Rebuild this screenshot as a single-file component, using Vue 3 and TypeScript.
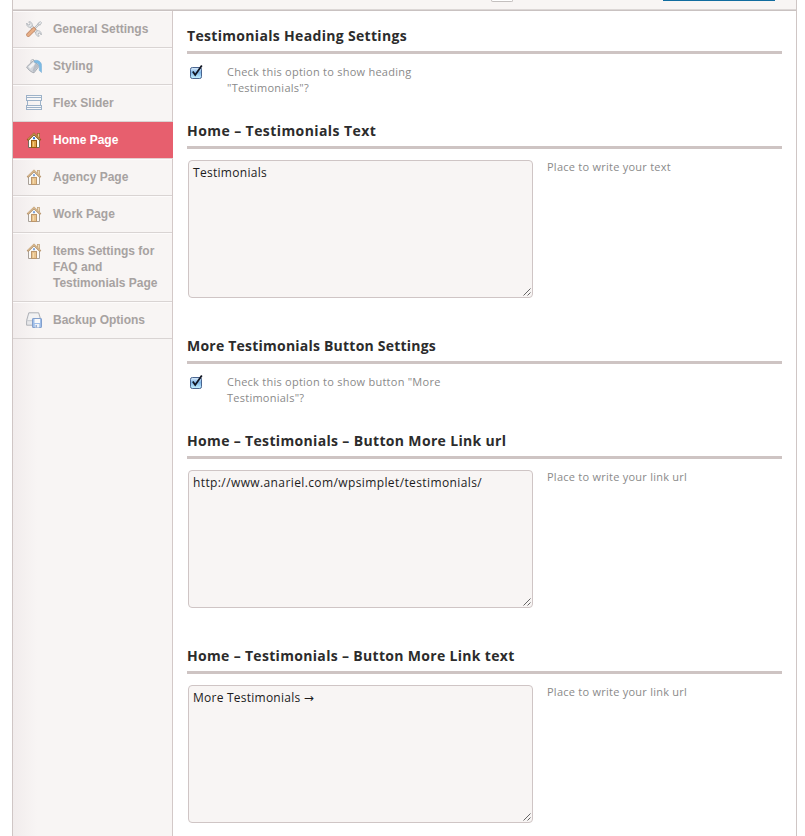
<script setup lang="ts">
type IconName = 'tools' | 'bucket' | 'slider' | 'home' | 'backup'

interface NavItem {
  label: string
  icon: IconName
  active?: boolean
}

interface Option {
  title: string
  tracking: string
  kind: 'checkbox' | 'textarea'
  help: string
  value?: string
  valueTracking?: string
}

const nav: NavItem[] = [
  { label: 'General Settings', icon: 'tools' },
  { label: 'Styling', icon: 'bucket' },
  { label: 'Flex Slider', icon: 'slider' },
  { label: 'Home Page', icon: 'home', active: true },
  { label: 'Agency Page', icon: 'home' },
  { label: 'Work Page', icon: 'home' },
  { label: 'Items Settings for FAQ and Testimonials Page', icon: 'home' },
  { label: 'Backup Options', icon: 'backup' },
]

const options: Option[] = [
  {
    title: 'Testimonials Heading Settings',
    tracking: '0.32px',
    kind: 'checkbox',
    help: 'Check this option to show heading "Testimonials"?',
  },
  {
    title: 'Home – Testimonials Text',
    tracking: '0.42px',
    kind: 'textarea',
    help: 'Place to write your text',
    value: 'Testimonials',
    valueTracking: '0.29px',
  },
  {
    title: 'More Testimonials Button Settings',
    tracking: '0.22px',
    kind: 'checkbox',
    help: 'Check this option to show button "More Testimonials"?',
  },
  {
    title: 'Home – Testimonials – Button More Link url',
    tracking: '0.34px',
    kind: 'textarea',
    help: 'Place to write your link url',
    value: 'http://www.anariel.com/wpsimplet/testimonials/',
    valueTracking: '0.39px',
  },
  {
    title: 'Home – Testimonials – Button More Link text',
    tracking: '0.32px',
    kind: 'textarea',
    help: 'Place to write your link url',
    value: 'More Testimonials →',
    valueTracking: '0.24px',
  },
]
</script>

<template>
  <div class="page">
    <div class="panel">
      <header class="topbar">
        <span class="stub-box"></span>
        <span class="stub-save"></span>
      </header>
      <div class="body">
        <nav class="sidebar">
          <a v-for="item in nav" :key="item.label" class="nav-item" :class="{ active: item.active }">
            <svg class="icon" viewBox="0 0 16 16" width="16" height="16">
              <g v-if="item.icon === 'tools'" fill="none" stroke-linecap="round">
                <path d="M4.4 4.6L11.6 11.8" stroke="#7b858f" stroke-width="3.4" />
                <path d="M4.4 4.6L11.6 11.8" stroke="#e6eaed" stroke-width="1.8" />
                <path d="M.7 2.4C.3 5.4 2.8 6.9 5 6C7 4.8 6.6 1 3.2 .6L2.7 .9L4 2.6L3.6 3.8L2.4 4Z" fill="#dfe4e8" stroke="#7b858f" stroke-width=".8" />
                <path d="M15.3 13.6C15.7 10.6 13.2 9.1 11 10C9 11.2 9.4 15 12.8 15.4L13.3 15.1L12 13.4L12.4 12.2L13.6 12Z" fill="#dfe4e8" stroke="#7b858f" stroke-width=".8" />
                <path d="M8.6 7.4L13.2 2.8" stroke="#7b858f" stroke-width="2" />
                <path d="M8.6 7.4L13.2 2.8" stroke="#e8ebee" stroke-width=".8" />
                <path d="M12.2 2.2L14.4 .6L15.6 1.8L14 4Z" fill="#e3e7ea" stroke="#7b858f" stroke-width=".8" />
                <path d="M2.3 13.8L7.8 8.3" stroke="#a44e1b" stroke-width="4.2" />
                <path d="M2.3 13.8L7.8 8.3" stroke="#df8340" stroke-width="2.6" />
              </g>
              <g v-else-if="item.icon === 'bucket'" stroke-linejoin="round">
                <path d="M5 7.5V3.1C5 1 8.2.9 8.5 3" fill="none" stroke="#7b838c" stroke-width=".9" />
                <path d="M.6 9L7.6 2.3L13 8.3L8 14.8C5.8 14.7 2 11.5.6 9Z" fill="#bcc4ce" stroke="#68727e" stroke-width=".9" />
                <path d="M2.6 8.8L7.4 4.2L9.2 6L4.2 10.8Z" fill="#eff2f4" />
                <path d="M8.1 14.2C9.3 12.6 9.7 10.3 12.6 8.3L9.3 4.9L6.5 12.7Z" fill="#8f9aa9" />
                <path d="M8.2 2.7C11.6 1.2 15.5 3.7 15.6 7.4V14.6L13.2 12.4V8.1C12.9 6.3 10.6 4.4 8.2 4.2Z" fill="#2b95dc" stroke="#2f7fbd" stroke-width=".5" />
              </g>
              <g v-else-if="item.icon === 'slider'" fill="#f8fafc" stroke="#6488ad">
                <path d="M1.5 5.5V10.5M14.5 5.5V10.5" />
                <rect x=".5" y=".5" width="15" height="5" />
                <path d="M.5 2.5H15.5" />
                <rect x=".5" y="10.5" width="15" height="4" />
                <path d="M.5 12.5H15.5" />
              </g>
              <g v-else-if="item.icon === 'home'">
                <rect x="11.4" y="1.5" width="2.2" height="5" fill="#e8c98f" stroke="#a06e2e" stroke-width=".8" />
                <path d="M2.5 8L8 2.8L13.5 8V15.5H2.5Z" fill="#fffdf6" stroke="#756b5e" />
                <rect x="5.5" y="8.5" width="5" height="7" fill="#e0a44b" stroke="#955a14" />
                <path d="M7.5 10V14.5" stroke="#f4ca7e" />
                <rect x="7" y="5.2" width="2" height="2" fill="#2e72d6" />
                <path d="M1.4 8.2L8 1.8L14.6 8.2" fill="none" stroke="#885415" stroke-width="2" />
                <path d="M1.8 7.6L8 1.6L14.2 7.6" fill="none" stroke="#e9b468" stroke-width="1" />
              </g>
              <g v-else>
                <path d="M2.8.8H12.7L15 8.5V13.2H.6V8.5Z" fill="#dde1e6" stroke="#757d88" stroke-width=".9" stroke-linejoin="round" />
                <path d="M3.4 1.7H12L13.7 8H1.9Z" fill="#f0f2f4" />
                <path d="M1 8.7H14.7" stroke="#979eaa" stroke-width=".8" />
                <rect x="6.5" y="6.5" width="9" height="9" rx=".6" fill="#659be3" stroke="#3467b3" />
                <rect x="8.5" y="7" width="5.5" height="4" fill="#fafdff" />
                <rect x="8.8" y="12" width="4.5" height="3.5" fill="#eef3fa" />
                <rect x="9.6" y="13" width="1.2" height="2.5" fill="#3467b3" />
              </g>
            </svg>
            <span class="nav-label">{{ item.label }}</span>
          </a>
        </nav>
        <main class="content">
          <section v-for="opt in options" :key="opt.title" class="option" :class="opt.kind">
            <h3 class="title" :style="{ letterSpacing: opt.tracking }">{{ opt.title }}</h3>
            <div class="row">
              <span v-if="opt.kind === 'checkbox'" class="check">
                <svg viewBox="0 0 15 16" width="15" height="16">
                  <defs>
                    <linearGradient id="aqua" x1="0" y1="0" x2="0" y2="1">
                      <stop offset="0" stop-color="#e1effb" />
                      <stop offset=".45" stop-color="#80b7ea" />
                      <stop offset="1" stop-color="#c7f2ff" />
                    </linearGradient>
                  </defs>
                  <rect x="1.5" y="3.5" width="11" height="11" rx="1.8" fill="url(#aqua)" stroke="#4a658f" />
                  <path d="M3.8 7.6L6.2 11L12.8 1.4" fill="none" stroke="#101522" stroke-width="1.8" />
                </svg>
              </span>
              <div v-else class="field">
                <span :style="{ letterSpacing: opt.valueTracking }">{{ opt.value }}</span>
                <svg class="grip" viewBox="0 0 8 8" width="8" height="8">
                  <path d="M.5 7.5L7.5 .5M4.5 7.5L7.5 4.5" stroke="#555" stroke-width=".9" fill="none" />
                </svg>
              </div>
              <p class="help">{{ opt.help }}</p>
            </div>
          </section>
        </main>
      </div>
    </div>
  </div>
</template>

<style>
body {
  margin: 0;
  background: #fff;
}
</style>

<style scoped>
.page {
  box-sizing: border-box;
  height: 836px;
  padding: 0 8px 0 12px;
  overflow: hidden;
}
.panel {
  display: flex;
  flex-direction: column;
  box-sizing: border-box;
  height: 836px;
  border: solid #cfc6c5;
  border-width: 0 1px;
}
.topbar {
  display: flex;
  align-items: flex-start;
  box-sizing: border-box;
  height: 11px;
  flex: none;
  padding-left: 478px;
  background: #f8f5f4;
  border-bottom: 1px solid #c9c2c1;
  box-shadow: inset 0 -1px #dcd7d6;
}
.stub-box {
  box-sizing: border-box;
  width: 22px;
  height: 2px;
  background: #fff;
  border: 1px solid #c4c0bf;
  border-top: 0;
  border-radius: 0 0 3px 3px;
}
.stub-save {
  width: 112px;
  height: 1px;
  margin-left: 150px;
  background: #116c9f;
}
.body {
  display: flex;
  flex: 1;
  min-height: 0;
}
.sidebar {
  box-sizing: border-box;
  width: 160px;
  flex: none;
  background: linear-gradient(90deg, #f1ecec 0, #f8f5f4 24px);
  border-right: 1px solid #d3c9c8;
}
.nav-item {
  display: flex;
  gap: 11px;
  box-sizing: border-box;
  min-height: 37px;
  padding: 10px 10px 10px 13px;
  border-bottom: 1px solid #d9d4d3;
  box-shadow: inset 0 1px #fdfbfb;
  color: #a7a2a1;
  font: bold 12px/16px "Liberation Sans", Arial, sans-serif;
}
.nav-item.active {
  margin-right: -1px;
  background: #e75f6e;
  border-bottom-color: #e4d0d0;
  box-shadow: none;
  color: #fff;
}
.icon {
  flex: none;
  opacity: 0.6;
}
.active .icon {
  opacity: 1;
}
.nav-label {
  width: 108px;
}
.nav-item:nth-child(7) {
  min-height: 69px;
}
.content {
  flex: 1;
  padding: 15px 14px 0;
  font-family: "Open Sans", "DejaVu Sans", sans-serif;
}
.option.checkbox {
  height: 95px;
}
.option.textarea {
  height: 215px;
}
.title {
  box-sizing: border-box;
  height: 28px;
  margin: 0;
  border-bottom: 3px solid #cec4c3;
  color: #2c2c2c;
  font-size: 14px;
  font-weight: 700;
  line-height: 20px;
  white-space: nowrap;
}
.row {
  display: flex;
  align-items: flex-start;
}
.checkbox .row {
  padding-top: 10px;
}
.textarea .row {
  padding: 11px 0 0 1px;
}
.check {
  display: flex;
  width: 38px;
  padding-left: 2px;
}
.field {
  position: relative;
  box-sizing: border-box;
  width: 345px;
  height: 138px;
  padding: 4px;
  background: #f8f5f4;
  border: 1px solid #cfc5c5;
  border-radius: 4px;
  color: #1c1c1c;
  font-size: 12px;
  line-height: 16px;
}
.grip {
  position: absolute;
  right: 1px;
  bottom: 1px;
}
.help {
  width: 220px;
  margin: 0;
  color: #8a8a8a;
  font-size: 11px;
  line-height: 16px;
  letter-spacing: 0.25px;
}
.textarea .help {
  margin: -1px 0 0 14px;
}
</style>
